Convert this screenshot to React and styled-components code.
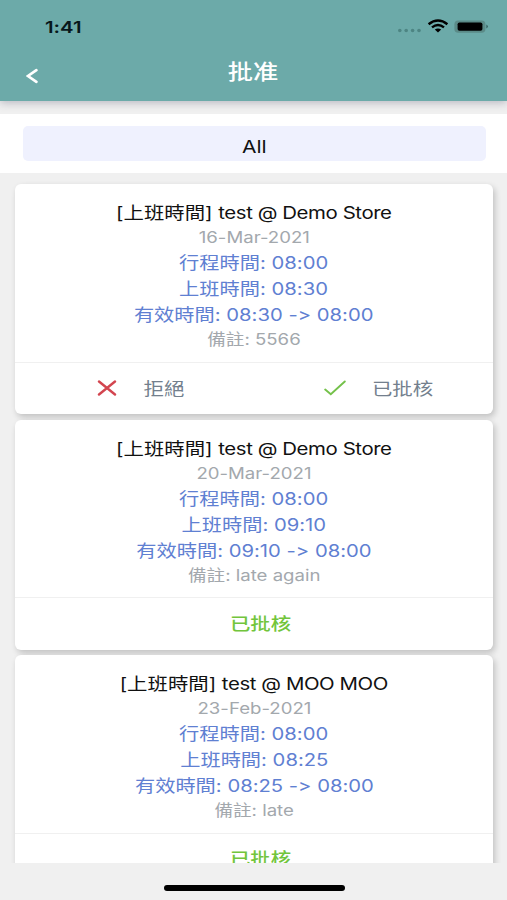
import styled, { createGlobalStyle } from "styled-components";

const records = [
  {
    id: 1,
    store: "test @ Demo Store",
    date: "16-Mar-2021",
    schedule: "08:00",
    clockIn: "08:30",
    remark: "5566",
    approved: false,
  },
  {
    id: 2,
    store: "test @ Demo Store",
    date: "20-Mar-2021",
    schedule: "08:00",
    clockIn: "09:10",
    remark: "late again",
    approved: true,
  },
  {
    id: 3,
    store: "test @ MOO MOO",
    date: "23-Feb-2021",
    schedule: "08:00",
    clockIn: "08:25",
    remark: "late",
    approved: true,
  },
];

const StatusIcons = () => (
  <svg width="92" height="16" viewBox="0 0 92 16">
    <g fill="#4d8583">
      <circle cx="2.8" cy="11.5" r="1.8" />
      <circle cx="9.2" cy="11.5" r="1.8" />
      <circle cx="15.6" cy="11.5" r="1.8" />
      <circle cx="22" cy="11.5" r="1.8" />
    </g>
    <g fill="none" stroke="#000" strokeWidth="2.4">
      <path d="M31.6 5.2 Q41 -2.4 50.4 5.2" />
      <path d="M35 8.4 Q41 3.6 47 8.4" />
    </g>
    <path d="M37.8 10.6 Q41 8.2 44.2 10.6 L41 13.4 Z" fill="#000" />
    <rect x="57.4" y="1.4" width="31" height="12.4" rx="3.8" fill="#5b8b88" />
    <rect x="60.6" y="3.4" width="24.8" height="8.4" rx="1.8" fill="#000" />
    <path d="M89.4 5.4 Q92.4 7.5 89.4 9.6 Z" fill="#35605e" />
  </svg>
);

const Card = ({ record }) => (
  <SCCard>
    <div className="details">
      <Line>
        <Wide>
          [上班時間] <Store>{record.store}</Store>
        </Wide>
      </Line>
      <Line $muted>
        <Wide>{record.date}</Wide>
      </Line>
      <Line $blue>
        <Wide $x={1.19}>行程時間: {record.schedule}</Wide>
      </Line>
      <Line $blue>
        <Wide $x={1.19}>上班時間: {record.clockIn}</Wide>
      </Line>
      <Line $blue>
        <Wide $x={1.19}>
          有效時間: {record.clockIn} -&gt; {record.schedule}
        </Wide>
      </Line>
      <Line $muted>
        <Wide>備註: {record.remark}</Wide>
      </Line>
    </div>
    {record.approved ? (
      <Footer $approved>
        <Wide>已批核</Wide>
      </Footer>
    ) : (
      <Footer>
        <Action>
          <svg width="20" height="16" viewBox="0 0 20 16">
            <path
              d="M2 1.5 L18 14.5 M18 1.5 L2 14.5"
              fill="none"
              stroke="#d3454f"
              strokeWidth="2.4"
              strokeLinecap="round"
            />
          </svg>
          <Wide>拒絕</Wide>
        </Action>
        <Action $wide>
          <svg width="22" height="16" viewBox="0 0 22 16">
            <path
              d="M1.2 9.6 L6.8 14.3 L20.8 1.5"
              fill="none"
              stroke="#74c14a"
              strokeWidth="1.9"
              strokeLinecap="round"
            />
          </svg>
          <Wide>已批核</Wide>
        </Action>
      </Footer>
    )}
  </SCCard>
);

const App = () => {
  return (
    <Screen>
      <GlobalStyle />
      <Header>
        <StatusBar>
          <Time>1:41</Time>
          <StatusIcons />
        </StatusBar>
        <TitleBar>
          <svg width="12" height="16" viewBox="0 0 12 16">
            <path
              d="M10.4 2.2 L2 8 L10.4 13.8"
              fill="none"
              stroke="#fff"
              strokeWidth="2.7"
              strokeLinecap="round"
            />
          </svg>
          <h1>
            <Wide>批准</Wide>
          </h1>
        </TitleBar>
      </Header>
      <Filter>
        <button>
          <Wide>All</Wide>
        </button>
      </Filter>
      <List>
        {records.map((record) => (
          <Card key={record.id} record={record} />
        ))}
      </List>
      <HomeArea>
        <div className="indicator" />
      </HomeArea>
    </Screen>
  );
};

const GlobalStyle = createGlobalStyle`
  * {
    box-sizing: border-box;
  }

  body {
    margin: 0;
    background: #f0f0f0;
    font-family: Inter, "Noto Sans CJK TC", sans-serif;
    font-variant-ligatures: none;
    font-feature-settings: "calt" 0;
  }
`;

const Screen = styled.div`
  width: 507px;
  height: 900px;
  display: flex;
  flex-direction: column;
  overflow: hidden;
  background: #f0f0f0;
`;

const Wide = styled.span`
  display: inline-block;
  white-space: nowrap;
  transform: scaleX(${(props) => props.$x || 1.2});
`;

const Store = styled.span`
  letter-spacing: -0.35px;
`;

const Header = styled.header`
  height: 101px;
  flex-shrink: 0;
  background: #6caaa9;
  box-shadow: 0 2px 8px rgba(60, 60, 90, 0.3);
`;

const StatusBar = styled.div`
  height: 52px;
  padding: 1px 18px 0 45px;
  display: flex;
  align-items: center;
  justify-content: space-between;
`;

const Time = styled.span`
  font-size: 16px;
  font-weight: 600;
  color: #07171a;
  transform: scaleX(1.27);
  transform-origin: left;
`;

const TitleBar = styled.div`
  height: 40px;
  padding: 0 39px 0 26px;
  display: flex;
  align-items: center;

  svg {
    margin-top: 7px;
  }

  h1 {
    flex: 1;
    margin: 0;
    text-align: center;
    font-size: 21px;
    line-height: 40px;
    font-weight: 500;
    color: #fff;
  }
`;

const Filter = styled.div`
  height: 59px;
  margin-top: 13px;
  padding: 12px 21px 12px 23px;
  flex-shrink: 0;
  background: #fff;

  button {
    width: 100%;
    height: 35px;
    padding: 5px 0 0;
    border: 0;
    border-radius: 5px;
    background: #eff1fe;
    font-family: inherit;
    font-size: 17.5px;
    color: #111;
  }
`;

const List = styled.main`
  flex: 1;
  min-height: 0;
  padding: 11px 14px 0 15px;
  display: flex;
  flex-direction: column;
  gap: 5.5px;
  overflow: hidden;
`;

const SCCard = styled.article`
  height: 230px;
  flex-shrink: 0;
  border-radius: 6px;
  background: #fff;
  box-shadow: 2px 3px 6px rgba(0, 0, 0, 0.2);

  .details {
    height: 177.5px;
    padding-top: 16px;
  }
`;

const Line = styled.div`
  height: ${(props) => (props.$muted ? "24px" : "26px")};
  line-height: ${(props) => (props.$muted ? "24px" : "26px")};
  text-align: center;
  font-size: ${(props) => (props.$muted ? "15.5px" : "17px")};
  color: ${(props) =>
    props.$muted ? "#a3a8ad" : props.$blue ? "#5f80d2" : "#111"};
`;

const Footer = styled.div`
  height: 52px;
  padding: ${(props) => (props.$approved ? "0 0 3px 12px" : "0 0 1px")};
  display: flex;
  align-items: center;
  justify-content: ${(props) => (props.$approved ? "center" : "flex-start")};
  border-top: 1px solid #f0f0f0;
  font-size: 17px;
  font-weight: ${(props) => (props.$approved ? 500 : 400)};
  color: ${(props) => (props.$approved ? "#72c53c" : "#737f8d")};
`;

const Action = styled.div`
  width: 50%;
  padding-left: ${(props) => (props.$wide ? "70px" : "82px")};
  display: flex;
  align-items: center;
  gap: ${(props) => (props.$wide ? "31px" : "30px")};
`;

const HomeArea = styled.footer`
  height: 37px;
  flex-shrink: 0;
  display: flex;
  justify-content: center;
  padding: 22px 0 0 1px;

  .indicator {
    width: 181px;
    height: 6px;
    border-radius: 3px;
    background: #000;
  }
`;

export default App;
